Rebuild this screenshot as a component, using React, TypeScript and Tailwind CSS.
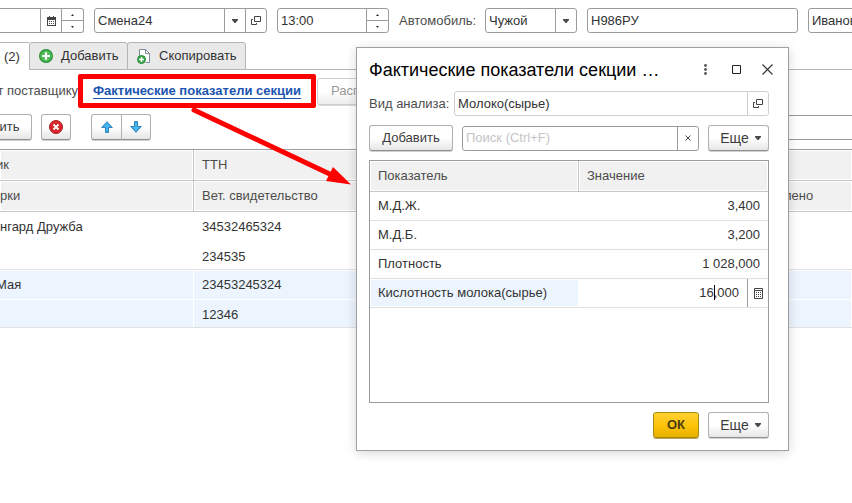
import React from "react";

const border = "border-[#9c9c9c]";
const buttonLook =
  "flex items-center justify-center rounded-[3px] border border-[#b0b0b0] border-b-[#8f8f8f] bg-gradient-to-b from-white from-50% to-[#e6e6e6] shadow-[0_1px_0_#d0d0d0] text-[#3c3c3c]";

function Caret() {
  return (
    <svg width="6" height="4" viewBox="0 0 6 4" aria-hidden="true">
      <path d="M0 0h6v1L3.500 4h-1L0 1z" fill="#4a4a4a" />
    </svg>
  );
}

function OpenIcon() {
  return (
    <svg width="10" height="10" viewBox="0 0 10 10" fill="none" stroke="#444" aria-hidden="true">
      <path d="M3.500 .5h6v5h-6zM2 3.500H.5v5h5V7" />
    </svg>
  );
}

function CalendarIcon() {
  return (
    <svg width="9" height="10" viewBox="0 0 9 10" aria-hidden="true">
      <path d="M0 1h9v9H0zM1 4v5h7V4z" fill="#444" fillRule="evenodd" />
      <path d="M2 0h1v2H2zM6 0h1v2H6z" fill="#444" />
      <path d="M2 5h1v1H2zM4 5h1v1H4zM6 5h1v1H6zM2 7h1v1H2zM4 7h1v1H4zM6 7h1v1H6z" fill="#444" />
    </svg>
  );
}

function CalculatorIcon() {
  return (
    <svg width="9" height="11" viewBox="0 0 9 11" aria-hidden="true">
      <path d="M.5.5h8v10h-8zM.5 2.500h8" fill="none" stroke="#444" />
      <path d="M2 4h1v1H2zM4 4h1v1H4zM6 4h1v1H6zM2 6h1v1H2zM4 6h1v1H4zM6 6h1v1H6zM2 8h1v1H2zM4 8h1v1H4zM6 8h1v1H6z" fill="#444" />
    </svg>
  );
}

function AddIcon() {
  return (
    <svg width="14" height="14" viewBox="0 0 14 14" aria-hidden="true">
      <circle cx="7" cy="7" r="6.400" fill="#4dbb57" stroke="#2b9137" strokeWidth="1.200" />
      <path d="M7 3.200v7.600M3.200 7h7.600" stroke="#fff" strokeWidth="2.200" />
    </svg>
  );
}

function CopyIcon() {
  return (
    <svg width="14" height="15" viewBox="0 0 14 15" aria-hidden="true">
      <path d="M2.500 7V.5h6l4 4v9H9" fill="#fff" stroke="#7b8b9b" />
      <path d="M8.500.5v4h4" fill="none" stroke="#7b8b9b" />
      <circle cx="4.500" cy="10.500" r="4" fill="#3fae49" stroke="#22863a" />
      <path d="M4.500 8v5M2 10.500h5" stroke="#fff" strokeWidth="1.400" />
    </svg>
  );
}

function ArrowIcon({ down = false }: { down?: boolean }) {
  return (
    <svg width="12" height="12" viewBox="0 0 12 12" aria-hidden="true">
      <path
        d={down ? "M4.500 .5h3v5h3.800L6 11.300.7 5.500h3.800z" : "M4.500 11.500h3v-5h3.800L6 .7.7 6.500h3.800z"}
        fill="#46b4f0"
        stroke="#2f83b8"
        strokeLinejoin="round"
      />
    </svg>
  );
}

function Spinner() {
  return (
    <span className={`flex w-[22px] shrink-0 flex-col border-l ${border}`}>
      <button aria-label="Больше" className={`flex flex-1 items-center justify-center border-b ${border}`}>
        <svg width="3" height="2" viewBox="0 0 3 2"><path d="M0 2L1.500 0 3 2z" fill="#333" /></svg>
      </button>
      <button aria-label="Меньше" className="flex flex-1 items-center justify-center">
        <svg width="3" height="2" viewBox="0 0 3 2"><path d="M0 0L1.500 2 3 0z" fill="#333" /></svg>
      </button>
    </span>
  );
}

function FieldButton({ label, children, tone = border }: { label: string; children: React.ReactNode; tone?: string }) {
  return (
    <button aria-label={label} className={`flex w-[21px] shrink-0 items-center justify-center border-l ${tone}`}>
      {children}
    </button>
  );
}

function Field({
  id,
  label,
  value,
  className,
  placeholder,
  tone = border,
  children,
}: {
  id?: string;
  label?: string;
  value?: string;
  className: string;
  placeholder?: string;
  tone?: string;
  children?: React.ReactNode;
}) {
  return (
    <div className={`flex h-[25px] rounded-[3px] border bg-white ${tone} ${className}`}>
      <input
        id={id}
        aria-label={label}
        defaultValue={value}
        placeholder={placeholder}
        className="w-full min-w-0 flex-1 bg-transparent pl-[3px] text-[#333] outline-none placeholder:text-[#c4c4c8]"
      />
      {children}
    </div>
  );
}

function MoreButton() {
  return (
    <button className={`h-[26px] w-[61px] gap-[6px] pl-1 text-[14px] ${buttonLook}`}>
      Еще <Caret />
    </button>
  );
}

const indicators = [
  ["М.Д.Ж.", "3,400"],
  ["М.Д.Б.", "3,200"],
  ["Плотность", "1 028,000"],
];

function IndicatorsDialog() {
  return (
    <section
      role="dialog"
      aria-labelledby="dialog-title"
      className="absolute left-[356px] top-[47px] w-[433px] border border-[#a0a0a0] bg-white pb-3 pl-3 pr-[19px] shadow-[0_2px_10px_rgba(0,0,0,0.16)]"
    >
      <header className="flex h-[43px] items-center">
        <h2 id="dialog-title" className="flex-1 whitespace-nowrap text-[18px] leading-6 text-black">
          Фактические показатели секции …
        </h2>
        <div className="flex items-center gap-5">
          <button aria-label="Меню" className="flex w-[11px] justify-center">
            <svg width="3" height="11" viewBox="0 0 3 11" fill="#555">
              <circle cx="1.500" cy="1.500" r="1.400" /><circle cx="1.500" cy="5.500" r="1.400" /><circle cx="1.500" cy="9.500" r="1.400" />
            </svg>
          </button>
          <button aria-label="Развернуть" className="flex w-[11px] justify-center">
            <svg width="9" height="9" viewBox="0 0 9 9"><path d="M.5.5h8v8h-8z" fill="none" stroke="#222" /></svg>
          </button>
          <button aria-label="Закрыть" className="-mr-1 flex w-[11px] justify-center">
            <svg width="11" height="11" viewBox="0 0 11 11"><path d="M.5.5l10 10M10.500.5l-10 10" stroke="#333" strokeWidth="1.100" /></svg>
          </button>
        </div>
      </header>

      <div className="flex items-center">
        <label htmlFor="analysis" className="w-[85px] whitespace-nowrap text-[#4d4d4d]">Вид анализа:</label>
        <Field id="analysis" value="Молоко(сырье)" tone="border-[#cfcfcf]" className="flex-1">
          <FieldButton label="Открыть" tone="border-[#cfcfcf]"><OpenIcon /></FieldButton>
        </Field>
      </div>

      <div className="mt-[9px] flex items-center gap-[9px]">
        <button className={`h-[26px] w-[84px] ${buttonLook}`}>Добавить</button>
        <Field label="Поиск" placeholder="Поиск (Ctrl+F)" className="flex-1">
          <FieldButton label="Очистить">
            <svg width="6" height="6" viewBox="0 0 6 6"><path d="M.5.5l5 5M5.500.5l-5 5" stroke="#444" /></svg>
          </FieldButton>
        </Field>
        <MoreButton />
      </div>

      <div className={`mt-[9px] h-[243px] border ${border}`}>
        <table className="w-full table-fixed border-separate border-spacing-0 text-[#333]">
          <colgroup><col className="w-[209px]" /><col /></colgroup>
          <thead>
            <tr className="h-[31px] text-left text-[#4d4d4d]">
              <th className="border-b border-r border-[#c6c6c6] bg-[#f1f1f1] pl-2 font-normal shadow-[inset_0_0_0_1px_#fff]">Показатель</th>
              <th className="border-b border-[#c6c6c6] bg-[#f1f1f1] pl-2 font-normal shadow-[inset_0_0_0_1px_#fff]">Значение</th>
            </tr>
          </thead>
          <tbody>
            {indicators.map(([name, value]) => (
              <tr key={name} className="h-[29px]">
                <td className="border-b border-[#e0e0e0] pl-2">{name}</td>
                <td className="border-b border-[#e0e0e0] pr-2 text-right">{value}</td>
              </tr>
            ))}
            <tr className="h-[29px]">
              <td className="border-b border-[#e0e0e0] bg-[#ecf5fe] pl-2 shadow-[inset_0_0_0_1px_#fff]">Кислотность молока(сырье)</td>
              <td className="border-b border-[#e0e0e0] p-0">
                <div className="relative flex h-[28px]">
                  <input
                    aria-label="Кислотность молока(сырье)"
                    defaultValue="16,000"
                    className="min-w-0 flex-1 pr-2 text-right outline-none"
                  />
                  <span className="absolute right-[53px] top-[6px] h-[15px] w-px bg-black" />
                  <FieldButton label="Калькулятор"><CalculatorIcon /></FieldButton>
                </div>
              </td>
            </tr>
          </tbody>
        </table>
      </div>

      <footer className="mt-[9px] flex justify-end gap-[9px]">
        <button className="h-[26px] w-[46px] rounded-[3px] border border-[#a88a10] bg-gradient-to-b from-[#ffd02e] via-[#fdc406] to-[#e8b000] text-[13px] font-bold text-[#4a3c10] shadow-[0_1px_0_#b8a050]">
          ОК
        </button>
        <MoreButton />
      </footer>
    </section>
  );
}

const head = "h-[31px] border-b border-[#c6c6c6] bg-[#f1f1f1] text-left font-normal text-[#4d4d4d] shadow-[inset_0_0_0_1px_#fff]";
const selected = "bg-[#ecf5fe] shadow-[inset_-1px_1px_0_#fff]";
const rowEnd = "border-b border-[#e0e0e0]";

export default function App() {
  return (
    <main className="relative min-h-screen overflow-hidden bg-white font-['Liberation_Sans',Arial,sans-serif] text-[13px] leading-4 text-[#333]">
      <div className="flex items-center gap-[10px] pt-2">
        <Field label="Дата" className="w-[84px] shrink-0 rounded-l-none border-l-0">
          <FieldButton label="Календарь"><CalendarIcon /></FieldButton>
          <Spinner />
        </Field>
        <Field label="Смена" value="Смена24" className="w-[173px] shrink-0">
          <FieldButton label="Выбрать"><Caret /></FieldButton>
          <FieldButton label="Открыть"><OpenIcon /></FieldButton>
        </Field>
        <Field label="Время" value="13:00" className="w-[112px] shrink-0"><Spinner /></Field>
        <label htmlFor="car" className="w-[76px] shrink-0 whitespace-nowrap text-[#4d4d4d]">Автомобиль:</label>
        <Field id="car" value="Чужой" className="w-[92px] shrink-0">
          <FieldButton label="Выбрать"><Caret /></FieldButton>
        </Field>
        <Field label="Номер" value="Н986РУ" className="w-[211px] shrink-0" />
        <Field label="Водитель" value="Иванов" className="w-[211px] shrink-0" />
      </div>

      <nav className="mt-[9px] flex h-7">
        <button className="w-[29px] shrink-0 border-t border-[#b4b4b4] pl-1 text-left">(2)</button>
        <button className="flex w-[99px] shrink-0 items-center gap-2 rounded-t-[3px] border border-[#b4b4b4] bg-[#e9e9e9] pl-[9px]">
          <AddIcon /> Добавить
        </button>
        <button className="-ml-px flex w-[119px] shrink-0 items-center gap-2 rounded-t-[3px] border border-[#b4b4b4] bg-[#e9e9e9] pl-[9px]">
          <CopyIcon /> Скопировать
        </button>
        <span className="flex-1 border-b border-[#b4b4b4]" />
      </nav>

      <div className="mt-1 flex h-[34px] items-center">
        <span className="flex w-[78px] shrink-0 justify-end whitespace-nowrap text-[#4d4d4d]">т поставщику</span>
        <div className="flex h-[34px] w-[238px] shrink-0 items-center justify-center rounded-[2px] border-5 border-[#fe0000]">
          <a href="#indicators" className="whitespace-nowrap border-b border-[#1c55b0] font-bold leading-[14px] text-[#1c55b0]">
            Фактические показатели секции
          </a>
        </div>
        <button className="ml-px h-[27px] w-[120px] rounded-[3px] border border-[#cfcfcf] bg-gradient-to-b from-white from-50% to-[#ededed] pl-[13px] text-left text-[#999] shadow-[0_1px_0_#d8d8d8]">
          Распределить
        </button>
      </div>

      <div className="mt-[6px] flex items-center">
        <button className={`h-[26px] w-8 rounded-l-none border-l-0 pr-3 ${buttonLook}`}>ить</button>
        <button aria-label="Удалить" className={`ml-[9px] h-[26px] w-[30px] ${buttonLook}`}>
          <svg width="14" height="14" viewBox="0 0 14 14">
            <circle cx="7" cy="7" r="6.500" fill="#d9272e" stroke="#a81c22" />
            <path d="M4.500 4.500l5 5M9.500 4.500l-5 5" stroke="#fff" strokeWidth="1.800" />
          </svg>
        </button>
        <button aria-label="Вверх" className={`ml-5 h-[26px] w-[31px] rounded-r-none ${buttonLook}`}><ArrowIcon /></button>
        <button aria-label="Вниз" className={`-ml-px h-[26px] w-[30px] rounded-l-none ${buttonLook}`}><ArrowIcon down /></button>
        <Field label="Фильтр" className="ml-[300px] flex-1 rounded-r-none border-r-0" />
      </div>

      <table className={`mt-[9px] w-full table-fixed border-separate border-spacing-0 border-t ${border}`}>
        <colgroup><col className="w-[194px]" /><col className="w-[586px]" /><col /></colgroup>
        <thead>
          <tr>
            <th className={`border-r ${head}`}><span className="-ml-1">ик</span></th>
            <th className={`pl-2 ${head}`}>ТТН</th>
            <th className={head} />
          </tr>
          <tr>
            <th className={`border-r ${head}`}>рки</th>
            <th className={`pl-2 ${head}`}>Вет. свидетельство</th>
            <th className={`pl-1 ${head}`}>лено</th>
          </tr>
        </thead>
        <tbody>
          <tr className="h-[29px]"><td>нгард Дружба</td><td className="pl-2">34532465324</td><td /></tr>
          <tr className="h-[29px]">
            <td className={rowEnd} />
            <td className={`pl-2 pt-1 ${rowEnd}`}>234535</td>
            <td className={rowEnd} />
          </tr>
          <tr className="h-[29px]">
            <td className={selected}><span className="-ml-1">Мая</span></td>
            <td className={`pl-2 ${selected}`}>23453245324</td>
            <td className={selected} />
          </tr>
          <tr className="h-[29px]">
            <td className={`${rowEnd} ${selected}`} />
            <td className={`pl-2 pt-1 ${rowEnd} ${selected}`}>12346</td>
            <td className={`${rowEnd} ${selected}`} />
          </tr>
        </tbody>
      </table>

      <IndicatorsDialog />

      <svg className="pointer-events-none absolute left-[186px] top-[102px]" width="170" height="88" viewBox="186 102 170 88" aria-hidden="true">
        <path d="M194 110L334 176" stroke="#fe0000" strokeWidth="5" strokeLinecap="round" />
        <path d="M351 184.500L333 167l-7 14z" fill="#fe0000" />
      </svg>
    </main>
  );
}
